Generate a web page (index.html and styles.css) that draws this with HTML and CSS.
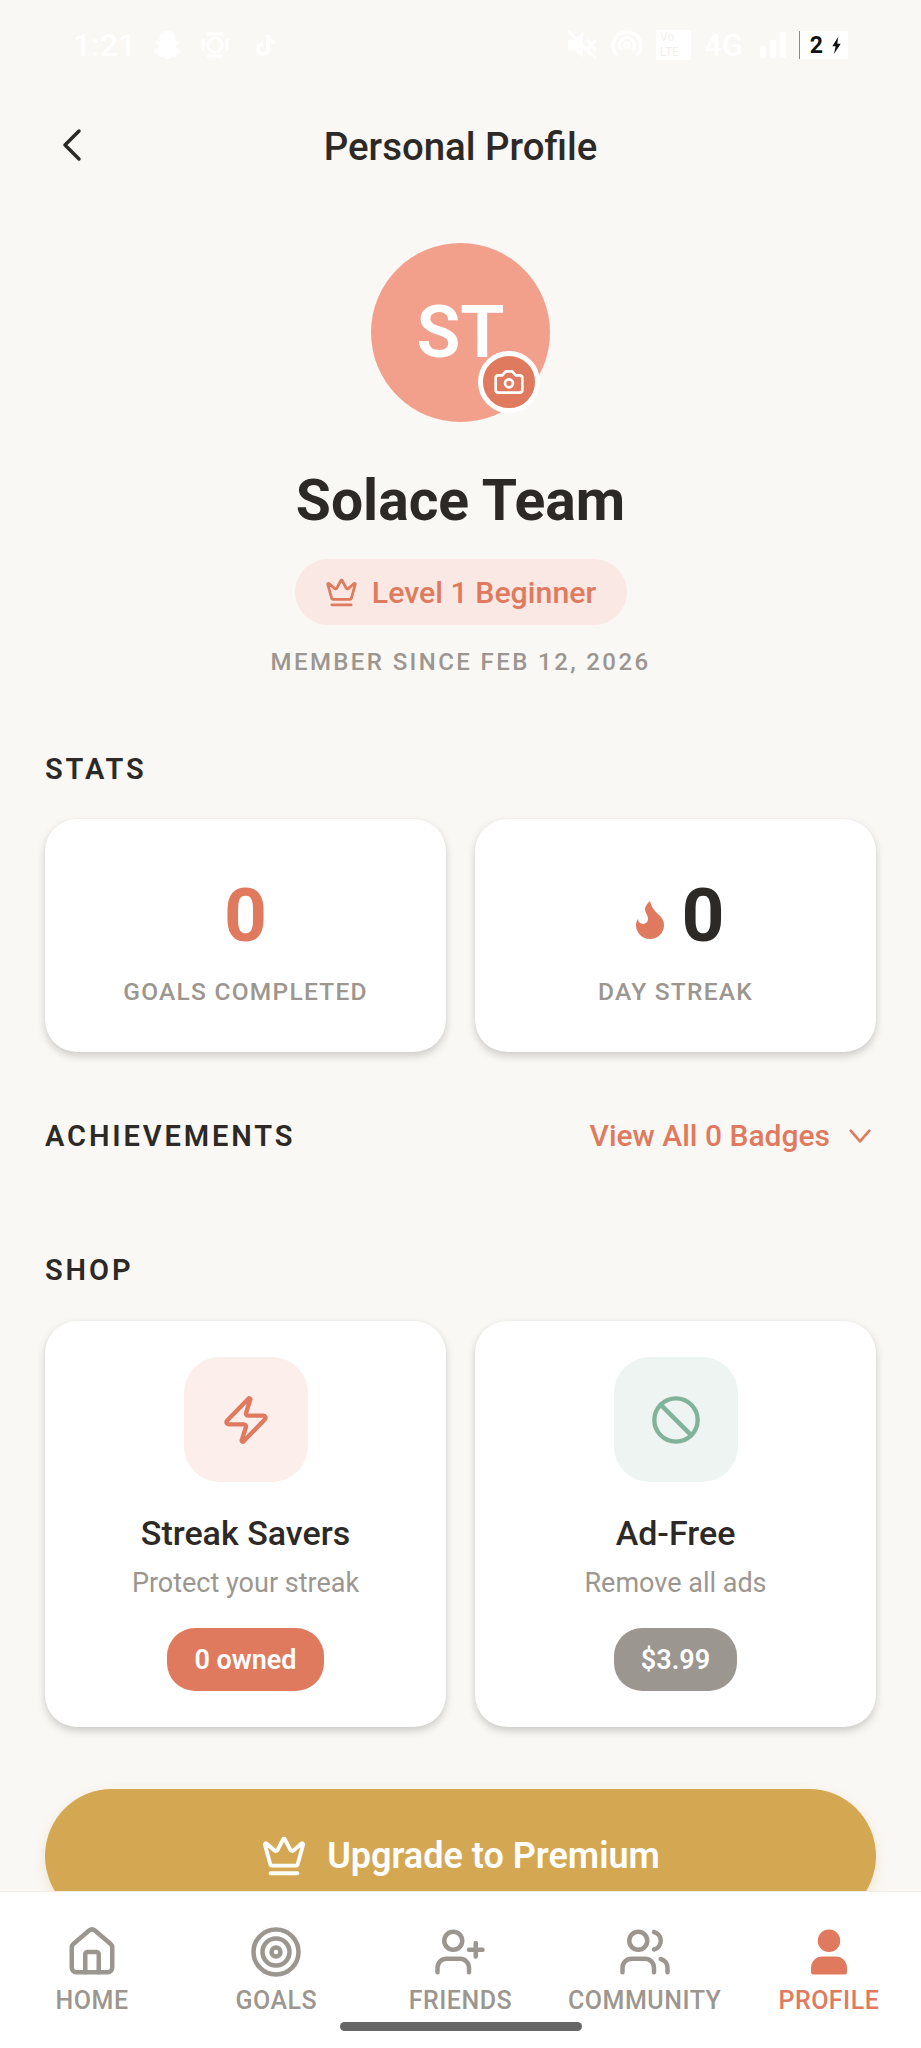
FILE: index.html
```html
<!DOCTYPE html>
<html lang="en">
  <head>
    <meta charset="UTF-8" />
    <meta name="viewport" content="width=device-width, initial-scale=1.0" />
    <title>Personal Profile</title>
    <link rel="stylesheet" href="styles.css">
  </head>
  <body>
    <div class="screen">
      <div class="content">
        <div class="status-bar">
          <div class="status-group">
            <span class="status-time">1:21</span>
            <svg class="status-icon" viewBox="0 0 30 30" fill="#fff"><path d="M15 1c5 0 7.500 3.500 7.500 8v3l3-1 1 2-4 2.500c1 3 3 4.500 6 5.500l-.5 2-4 1-1 3-4-.5c-1.500 1.500-2.500 2.500-4.500 2.500s-3-1-4.500-2.500l-4 .5-1-3-4-1-.5-2c3-1 5-2.500 6-5.500l-4-2.500 1-2 3 1V9c0-4.500 2.500-8 7.500-8z"/></svg>
            <svg class="status-icon" viewBox="0 0 30 30" fill="none" stroke="#fff" stroke-width="3"><circle cx="15" cy="15" r="7"/><path d="M7 4h16M7 26h16M3 9v12M27 9v12"/></svg>
            <svg class="status-icon status-icon-small" viewBox="0 0 24 24" fill="none" stroke="#fff" stroke-width="4"><path d="M14 2v14a5 5 0 1 1-5-5M14 3c0 4 3 6 7 6"/></svg>
          </div>
          <div class="status-group status-group-right">
            <svg class="status-icon status-icon-large" viewBox="0 0 30 30" fill="#fff"><path d="M2 10h6l8-7v24l-8-7H2z"/><path d="M20 10l8 10M28 10l-8 10M2 2l26 26" stroke="#fff" stroke-width="3"/></svg>
            <svg class="status-icon status-icon-large" viewBox="0 0 30 30" fill="none" stroke="#fff" stroke-width="3"><path d="M6 25a13 13 0 1 1 18 0M10 20a7 7 0 1 1 10 0"/><circle cx="15" cy="15" r="2"/></svg>
            <span class="status-volte">Vo<br>LTE</span>
            <span class="status-net">4G</span>
            <span class="status-bars"><i class="bar-1"></i><i class="bar-2"></i><i class="bar-3"></i></span>
            <span class="status-battery">2
              <svg class="status-bolt" viewBox="0 0 12 20" fill="#111"><path d="M8 0 1 11h4l-2 9 8-12H7z"/></svg>
            </span>
          </div>
        </div>

        <header class="topbar">
          <svg class="back-icon" viewBox="0 0 20 34" fill="none" stroke="#2d2926" stroke-width="3.500" stroke-linecap="round" stroke-linejoin="round"><path d="M17 3 3 17l14 14"/></svg>
          <h1 class="topbar-title">Personal Profile</h1>
        </header>

        <section class="profile">
          <div class="avatar">
            ST
            <span class="avatar-badge">
              <svg class="badge-icon" viewBox="0 0 24 24" fill="none" stroke="#fff" stroke-width="2" stroke-linecap="round" stroke-linejoin="round"><path d="M14.500 4h-5L7 7H4a2 2 0 0 0-2 2v9a2 2 0 0 0 2 2h16a2 2 0 0 0 2-2V9a2 2 0 0 0-2-2h-3l-2.500-3z"/><circle cx="12" cy="13" r="3"/></svg>
            </span>
          </div>
          <h2 class="profile-name">Solace Team</h2>
          <div class="level-pill">
            <svg class="level-icon" viewBox="0 0 24 24" fill="none" stroke="#e07a5f" stroke-width="2" stroke-linecap="round" stroke-linejoin="round"><path d="M11.562 3.266a.5.5 0 0 1 .876 0L15.390 8.870a1 1 0 0 0 1.516.294L21.183 5.500a.5.5 0 0 1 .798.519l-2.834 10.246a1 1 0 0 1-.956.734H5.810a1 1 0 0 1-.957-.734L2.020 6.020a.5.5 0 0 1 .798-.519l4.276 3.664a1 1 0 0 0 1.516-.294z"/><path d="M5 21h14"/></svg>
            Level 1 Beginner
          </div>
          <p class="member-since">MEMBER SINCE FEB 12, 2026</p>
        </section>

        <h3 class="section-title stats-title">STATS</h3>
        <div class="card-grid stats-grid">
          <div class="card stat-card">
            <div class="stat-value stat-value-coral">0</div>
            <div class="stat-label">GOALS COMPLETED</div>
          </div>
          <div class="card stat-card">
            <div class="stat-value">
              <svg class="flame-icon" viewBox="0 0 24 24" fill="#e07a5f"><path d="M8.500 14.500A2.500 2.500 0 0 0 11 12c0-1.380-.5-2-1-3-1.072-2.143-.224-4.054 2-6 .5 2.500 2 4.900 4 6.500 2 1.600 3 3.500 3 5.500a7 7 0 1 1-14 0c0-1.153.433-2.294 1-3a2.500 2.500 0 0 0 2.500 2.500z"/></svg>
              0
            </div>
            <div class="stat-label">DAY STREAK</div>
          </div>
        </div>

        <div class="achievements-row">
          <h3 class="section-title">ACHIEVEMENTS</h3>
          <div class="view-all">
            View All 0 Badges
            <svg class="chevron-icon" viewBox="0 0 24 24" fill="none" stroke="#e07a5f" stroke-width="2" stroke-linecap="round" stroke-linejoin="round"><path d="m5 8 7 8 7-8"/></svg>
          </div>
        </div>

        <h3 class="section-title shop-title">SHOP</h3>
        <div class="card-grid shop-grid">
          <div class="card shop-card">
            <div class="shop-icon shop-icon-coral">
              <svg class="shop-svg" viewBox="0 0 24 24" fill="none" stroke="#e07a5f" stroke-width="2" stroke-linecap="round" stroke-linejoin="round"><path d="M4 14a1 1 0 0 1-.78-1.630l9.900-10.200a.5.5 0 0 1 .86.460l-1.920 6.020A1 1 0 0 0 13 10h7a1 1 0 0 1 .78 1.630l-9.900 10.200a.5.5 0 0 1-.86-.460l1.920-6.020A1 1 0 0 0 11 14z"/></svg>
            </div>
            <div class="shop-name">Streak Savers</div>
            <div class="shop-desc">Protect your streak</div>
            <div class="shop-pill shop-pill-coral">0 owned</div>
          </div>
          <div class="card shop-card">
            <div class="shop-icon shop-icon-green">
              <svg class="shop-svg" viewBox="0 0 24 24" fill="none" stroke="#81b29a" stroke-width="2" stroke-linecap="round" stroke-linejoin="round"><circle cx="12" cy="12" r="10"/><path d="m4.900 4.900 14.200 14.200"/></svg>
            </div>
            <div class="shop-name">Ad-Free</div>
            <div class="shop-desc">Remove all ads</div>
            <div class="shop-pill shop-pill-grey">$3.99</div>
          </div>
        </div>

        <div class="upgrade-btn">
          <svg class="upgrade-icon" viewBox="0 0 24 24" fill="none" stroke="#fff" stroke-width="2" stroke-linecap="round" stroke-linejoin="round"><path d="M11.562 3.266a.5.5 0 0 1 .876 0L15.390 8.870a1 1 0 0 0 1.516.294L21.183 5.500a.5.5 0 0 1 .798.519l-2.834 10.246a1 1 0 0 1-.956.734H5.810a1 1 0 0 1-.957-.734L2.020 6.020a.5.5 0 0 1 .798-.519l4.276 3.664a1 1 0 0 0 1.516-.294z"/><path d="M5 21h14"/></svg>
          Upgrade to Premium
        </div>
      </div>

      <nav class="bottom-nav">
        <div class="nav-items">
          <div class="nav-item">
            <svg class="nav-icon" viewBox="0 0 24 24" fill="none" stroke="currentColor" stroke-width="2" stroke-linecap="round" stroke-linejoin="round"><path d="M15 21v-8a1 1 0 0 0-1-1h-4a1 1 0 0 0-1 1v8"/><path d="M3 10a2 2 0 0 1 .709-1.528l7-5.999a2 2 0 0 1 2.582 0l7 5.999A2 2 0 0 1 21 10v9a2 2 0 0 1-2 2H5a2 2 0 0 1-2-2z"/></svg>
            HOME
          </div>
          <div class="nav-item">
            <svg class="nav-icon" viewBox="0 0 24 24" fill="none" stroke="currentColor" stroke-width="2" stroke-linecap="round" stroke-linejoin="round"><circle cx="12" cy="12" r="10"/><circle cx="12" cy="12" r="6"/><circle cx="12" cy="12" r="2"/></svg>
            GOALS
          </div>
          <div class="nav-item">
            <svg class="nav-icon" viewBox="0 0 24 24" fill="none" stroke="currentColor" stroke-width="2" stroke-linecap="round" stroke-linejoin="round"><path d="M16 21v-2a4 4 0 0 0-4-4H6a4 4 0 0 0-4 4v2"/><circle cx="9" cy="7" r="4"/><path d="M19 8v6M22 11h-6"/></svg>
            FRIENDS
          </div>
          <div class="nav-item">
            <svg class="nav-icon" viewBox="0 0 24 24" fill="none" stroke="currentColor" stroke-width="2" stroke-linecap="round" stroke-linejoin="round"><path d="M16 21v-2a4 4 0 0 0-4-4H6a4 4 0 0 0-4 4v2"/><circle cx="9" cy="7" r="4"/><path d="M22 21v-2a4 4 0 0 0-3-3.870"/><path d="M16 3.130a4 4 0 0 1 0 7.750"/></svg>
            COMMUNITY
          </div>
          <div class="nav-item nav-item-active">
            <svg class="nav-icon" viewBox="0 0 24 24" fill="currentColor" stroke="currentColor" stroke-width="2" stroke-linecap="round" stroke-linejoin="round"><path d="M19 21v-2a4 4 0 0 0-4-4H9a4 4 0 0 0-4 4v2z"/><circle cx="12" cy="7" r="4"/></svg>
            PROFILE
          </div>
        </div>
        <div class="home-indicator"></div>
      </nav>
    </div>
  </body>
</html>
```

FILE: styles.css
```css
* {
  box-sizing: border-box;
}

html,
body {
  margin: 0;
  padding: 0;
}

body {
  font-family: Roboto, "Noto Sans", sans-serif;
  background-color: #faf8f5;
  color: #2d2926;
}

.screen {
  display: flex;
  flex-direction: column;
  width: 921px;
  height: 2048px;
  overflow: hidden;
}

.content {
  flex: 1;
  min-height: 0;
  overflow: hidden;
}

/* status bar, white on the cream background */
.status-bar {
  display: flex;
  justify-content: space-between;
  align-items: center;
  height: 90px;
  padding: 0 73px;
}

.status-group {
  display: flex;
  align-items: center;
  gap: 17px;
}

.status-group-right {
  gap: 13px;
}

.status-time {
  font-size: 32px;
  font-weight: 500;
  color: #fff;
}

.status-icon {
  width: 30px;
  height: 30px;
}

.status-icon-small {
  width: 24px;
  height: 24px;
  margin-left: 7px;
}

.status-icon-large {
  width: 32px;
  height: 32px;
}

.status-volte {
  width: 35px;
  height: 30px;
  background-color: #fff;
  color: #f3f0ec;
  font-size: 12px;
  line-height: 15px;
  padding-left: 4px;
}

.status-net {
  font-size: 31px;
  font-weight: 500;
  color: #fff;
}

.status-bars {
  display: flex;
  align-items: flex-end;
  gap: 4px;
  height: 26px;
  margin-left: 4px;
}

.status-bars i {
  display: block;
  width: 6px;
  background-color: #fff;
}

.bar-1 {
  height: 12px;
}

.bar-2 {
  height: 18px;
}

.bar-3 {
  height: 26px;
}

.status-battery {
  display: flex;
  align-items: center;
  gap: 8px;
  height: 28px;
  padding: 0 6px 0 10px;
  background-color: #fff;
  border-left: 1px solid #56a77d;
  color: #111;
  font-size: 23px;
  font-weight: 700;
}

.status-bolt {
  width: 11px;
  height: 17px;
}

/* header */
.topbar {
  position: relative;
  display: flex;
  justify-content: center;
  align-items: center;
  height: 110px;
  padding-top: 2px;
}

.back-icon {
  position: absolute;
  left: 62px;
  top: 38px;
  width: 20px;
  height: 34px;
}

.topbar-title {
  margin: 0;
  font-size: 38.400px;
  font-weight: 500;
}

/* profile block */
.profile {
  display: flex;
  flex-direction: column;
  align-items: center;
  padding-top: 43px;
}

.avatar {
  position: relative;
  display: flex;
  justify-content: center;
  align-items: center;
  width: 179px;
  height: 179px;
  border-radius: 50%;
  background-color: #f2a08c;
  color: #fff;
  font-size: 72px;
  font-weight: 600;
}

.avatar-badge {
  position: absolute;
  right: 10px;
  bottom: 9px;
  display: flex;
  justify-content: center;
  align-items: center;
  width: 62px;
  height: 62px;
  border: 5px solid #fff;
  border-radius: 50%;
  background-color: #e07a5f;
}

.badge-icon {
  width: 32px;
  height: 32px;
}

.profile-name {
  margin: 45px 0 0;
  font-size: 57px;
  line-height: 68px;
  font-weight: 700;
}

.level-pill {
  display: flex;
  justify-content: center;
  align-items: center;
  gap: 14px;
  width: 332px;
  height: 66px;
  margin-top: 24px;
  border-radius: 33px;
  background-color: #f9e8e3;
  color: #e07a5f;
  font-size: 30.300px;
  font-weight: 500;
}

.level-icon {
  width: 33px;
  height: 33px;
}

.member-since {
  margin: 22px 0 0;
  font-size: 24px;
  line-height: 30px;
  font-weight: 500;
  letter-spacing: 2.400px;
  color: #9c9690;
}

/* sections */
.section-title {
  margin: 0;
  font-size: 29px;
  line-height: 32px;
  font-weight: 600;
  letter-spacing: 2.900px;
}

.stats-title {
  margin: 76px 45px 0;
}

.card-grid {
  display: grid;
  grid-template-columns: 1fr 1fr;
  gap: 29px;
  margin: 0 45px;
}

.stats-grid {
  margin-top: 34px;
}

.card {
  display: flex;
  flex-direction: column;
  align-items: center;
  border-radius: 32px;
  background-color: #fff;
  box-shadow: 0 4px 8px rgba(0, 0, 0, 0.18), 0 0 2px rgba(0, 0, 0, 0.05);
}

.stat-card {
  height: 233px;
  padding-top: 51px;
}

.stat-value {
  display: flex;
  align-items: center;
  gap: 7px;
  height: 90px;
  font-size: 75px;
  font-weight: 700;
}

.stat-value-coral {
  color: #e07a5f;
}

.flame-icon {
  width: 48px;
  height: 48px;
  margin-top: 8px;
}

.stat-label {
  margin-top: 17px;
  font-size: 24.500px;
  line-height: 30px;
  font-weight: 500;
  letter-spacing: 1.250px;
  color: #9c9690;
}

.achievements-row {
  display: flex;
  justify-content: space-between;
  align-items: center;
  height: 36px;
  margin: 66px 45px 0;
}

.view-all {
  display: flex;
  align-items: center;
  gap: 14px;
  font-size: 30px;
  line-height: 34px;
  font-weight: 500;
  color: #e07a5f;
}

.chevron-icon {
  width: 32px;
  height: 32px;
}

.shop-title {
  margin: 100px 45px 0;
}

.shop-grid {
  margin-top: 35px;
}

.shop-card {
  height: 406px;
  padding-top: 36px;
}

.shop-icon {
  display: flex;
  justify-content: center;
  align-items: center;
  width: 124px;
  height: 125px;
  border-radius: 36px;
}

.shop-icon-coral {
  background-color: #fceeeb;
}

.shop-icon-green {
  background-color: #eef4f1;
}

.shop-svg {
  width: 52px;
  height: 52px;
}

.shop-name {
  margin-top: 31px;
  font-size: 34px;
  line-height: 40px;
  font-weight: 500;
}

.shop-desc {
  margin-top: 14px;
  font-size: 27px;
  line-height: 32px;
  color: #9c9690;
}

.shop-pill {
  display: flex;
  justify-content: center;
  align-items: center;
  height: 63px;
  margin-top: 29px;
  padding: 0 27px;
  border-radius: 28px;
  color: #fff;
  font-size: 27px;
  font-weight: 600;
}

.shop-pill-coral {
  background-color: #e07a5f;
}

.shop-pill-grey {
  background-color: #9c9690;
}

.upgrade-btn {
  display: flex;
  justify-content: center;
  align-items: center;
  gap: 20px;
  height: 134px;
  margin: 62px 45px 0;
  border-radius: 67px;
  background-color: #d4a853;
  box-shadow: 0 4px 12px rgba(212, 168, 83, 0.25);
  color: #fff;
  font-size: 36px;
  font-weight: 600;
}

.upgrade-icon {
  width: 46px;
  height: 46px;
}

/* bottom nav */
.bottom-nav {
  display: flex;
  flex-direction: column;
  align-items: center;
  height: 157px;
  padding-top: 33px;
  background-color: #fff;
  border-top: 1px solid #f1eeea;
}

.nav-items {
  display: grid;
  grid-template-columns: repeat(5, 1fr);
  width: 100%;
}

.nav-item {
  display: flex;
  flex-direction: column;
  align-items: center;
  color: #9c9690;
  font-size: 25px;
  line-height: 30px;
  font-weight: 500;
  letter-spacing: 0.500px;
}

.nav-item-active {
  color: #e07a5f;
}

.nav-icon {
  width: 54px;
  height: 54px;
  margin-bottom: 7px;
}

.home-indicator {
  width: 242px;
  height: 9px;
  margin-top: 6px;
  border-radius: 5px;
  background-color: #666;
}
```
